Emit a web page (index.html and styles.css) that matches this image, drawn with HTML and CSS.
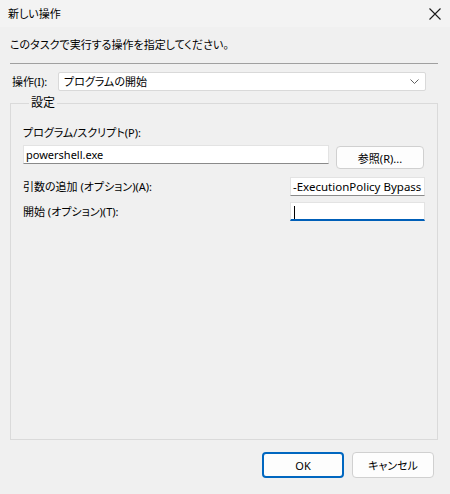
FILE: index.html
```html
<!DOCTYPE html>
<html lang="ja">
<head>
    <meta charset="UTF-8">
    <meta name="viewport" content="width=device-width, initial-scale=1.0">
    <title>新しい操作</title>
    <link rel="stylesheet" href="styles.css">
</head>
<body>
    <div class="titlebar">
        <span class="title">新しい操作</span>
        <svg class="close" width="12" height="12" viewBox="0 0 12 12">
            <path d="M0.5 0.5 L11.5 11.5 M11.5 0.5 L0.5 11.5" stroke="#1a1a1a" stroke-width="1.1" fill="none"/>
        </svg>
    </div>
    <div class="content">
        <p class="intro">このタスクで実行する操作を指定してください。</p>
        <div class="divider"></div>
        <div class="action-row">
            <span class="label">操作(I):</span>
            <div class="select">
                <span>プログラムの開始</span>
                <svg width="9" height="5" viewBox="0 0 9 5">
                    <path d="M0.5 0.5 L4.5 4.5 L8.5 0.5" stroke="#606060" stroke-width="1" fill="none"/>
                </svg>
            </div>
        </div>
        <fieldset class="settings">
            <legend>設定</legend>
            <div class="field-label">プログラム/スクリプト(P):</div>
            <div class="program-row">
                <div class="textbox wide">powershell.exe</div>
                <button class="btn browse">参照(R)...</button>
            </div>
            <div class="option-row">
                <span>引数の追加 (オプション)(A):</span>
                <div class="textbox short">-ExecutionPolicy Bypass</div>
            </div>
            <div class="option-row start">
                <span>開始 (オプション)(T):</span>
                <div class="textbox short focused"><span class="caret"></span></div>
            </div>
        </fieldset>
    </div>
    <div class="footer">
        <button class="btn primary">OK</button>
        <button class="btn">キャンセル</button>
    </div>
</body>
</html>
```

FILE: styles.css
```css
html, body {
    margin: 0;
    padding: 0;
}

body {
    width: 450px;
    height: 494px;
    display: flex;
    flex-direction: column;
    background-color: #f0f0f0;
    color: #000;
    font-family: "Noto Sans", "Noto Sans CJK JP", sans-serif;
    font-size: 11px;
    font-feature-settings: "palt";
    line-height: 16px;
    overflow: hidden;
}

.titlebar {
    height: 27px;
    background-color: #f3f3f3;
    display: flex;
    align-items: center;
    justify-content: space-between;
    padding: 0 9px 0 8px;
    flex-shrink: 0;
}

.close {
    display: block;
    margin-top: 1px;
}

.content {
    flex: 1;
    display: flex;
    flex-direction: column;
    padding: 0 12px 0 10px;
}

.intro {
    margin: 10px 0 0 0;
    height: 16px;
}

.divider {
    margin-top: 10px;
    height: 1px;
    background-color: #a0a0a0;
}

.action-row {
    display: flex;
    align-items: center;
    margin-top: 8px;
    padding-left: 2px;
}

.action-row .label {
    width: 46px;
}

.select {
    width: 355px;
    height: 17px;
    border: 1px solid #d9d9d9;
    border-radius: 2px;
    background-color: #fff;
    display: flex;
    align-items: center;
    justify-content: space-between;
    padding: 0 6px 0 5px;
    margin-right: 2px;
}

.settings {
    flex: 1;
    margin: 4px 0 0 0;
    padding: 14px 12px 0 12px;
    border: 1px solid #dadada;
    min-width: 0;
}

.settings legend {
    padding: 0 2px;
    margin-left: 6px;
    line-height: 16px;
    font-size: 12px;
}

.field-label {
    height: 16px;
}

.program-row {
    display: flex;
    align-items: flex-start;
    margin-top: 4px;
}

.textbox {
    height: 17px;
    border: 1px solid #e3e3e3;
    border-bottom-color: #8a8a8a;
    background-color: #fff;
    padding: 0 2px;
    line-height: 17px;
    white-space: nowrap;
    overflow: hidden;
}

.textbox.wide {
    width: 300px;
    margin-right: 7px;
}

.textbox.short {
    width: 129px;
    margin-right: 0;
    font-size: 11.5px;
}

.textbox.focused {
    border-bottom: 2px solid #005fb8;
    height: 16px;
}

.caret {
    display: inline-block;
    width: 1px;
    height: 13px;
    background-color: #000;
    vertical-align: middle;
    margin-left: 1px;
}

.option-row {
    display: flex;
    align-items: center;
    justify-content: space-between;
    margin-top: 8px;
}

.option-row.start {
    margin-top: 6px;
}

.btn {
    font-family: "Noto Sans", "Noto Sans CJK JP", sans-serif;
    font-size: 11px;
    font-feature-settings: "palt";
    background-color: #fdfdfd;
    border: 1px solid #d0d0d0;
    border-radius: 4px;
    color: #000;
    padding: 0;
    cursor: pointer;
}

.browse {
    width: 88px;
    height: 23px;
    margin-top: 1px;
}

.footer {
    height: 54px;
    flex-shrink: 0;
    display: flex;
    justify-content: flex-end;
    align-items: flex-start;
    gap: 8px;
    padding: 12px 16px 0 0;
    box-sizing: border-box;
}

.footer .btn {
    width: 82px;
    height: 26px;
}

.footer .primary {
    border: 2px solid #0067c0;
}
```
